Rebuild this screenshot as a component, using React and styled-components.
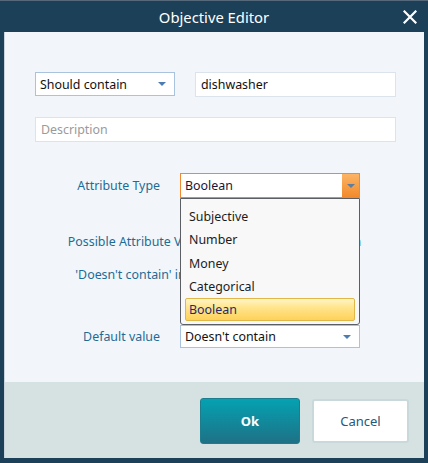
import React from "react";
import styled, { createGlobalStyle } from "styled-components";

const Global = createGlobalStyle`
  html, body { margin: 0; padding: 0; background: #1d4059; }
  * { box-sizing: border-box; }
  body { font-family: "Noto Sans", "Open Sans", sans-serif; }
`;

const Frame = styled.div`
  width: 428px;
  height: 463px;
  background: #1d4059;
  border-top: 1px solid #55697a;
  display: flex;
  flex-direction: column;
  padding: 0 4px 5px 4px;
`;

const TitleBar = styled.div`
  height: 31px;
  display: flex;
  align-items: center;
  justify-content: center;
  position: relative;
  color: #ffffff;
  font-size: 14.8px;
  font-family: "Noto Sans", sans-serif;
`;

const CloseButton = styled.button`
  position: absolute;
  right: 6px;
  top: 8px;
  width: 16px;
  height: 16px;
  padding: 0;
  border: 0;
  background: transparent;
  display: flex;
  align-items: center;
  justify-content: center;
`;

const Body = styled.div`
  flex: 1;
  background: #f2f6fa;
  border-left: 1px solid #c9d3db;
  display: flex;
  flex-direction: column;
`;

const Content = styled.div`
  flex: 1;
  padding: 40px 28px 0 30px;
  display: flex;
  flex-direction: column;
  font-size: 12.4px;
`;

const Row = styled.div`
  display: flex;
  gap: 20px;
  margin-top: ${(p) => p.$mt || 0}px;
`;

const Select = styled.div`
  width: ${(p) => p.$w}px;
  height: ${(p) => p.$h || 24}px;
  background: #ffffff;
  border: 1px solid ${(p) => p.$border || "#a9c3de"};
  display: flex;
  align-items: center;
  padding-left: 4px;
  color: ${(p) => p.$color || "#111"};
  position: relative;
`;

const SelectText = styled.span`
  flex: 1;
`;

const ArrowCell = styled.div`
  width: ${(p) => p.$w || 20}px;
  align-self: stretch;
  display: flex;
  align-items: center;
  justify-content: center;
  background: ${(p) => p.$bg || "transparent"};
`;

const Arrow = styled.span`
  width: 0;
  height: 0;
  border-left: 4px solid transparent;
  border-right: 4px solid transparent;
  border-top: 4px solid ${(p) => p.$c || "#4b7db3"};
`;

const Input = styled.div`
  flex: 1;
  height: 25px;
  background: #fff;
  border: 1px solid #dde3ea;
  display: flex;
  align-items: center;
  padding-left: 5px;
  color: ${(p) => (p.$placeholder ? "#9a9a9a" : "#111")};
`;

const FieldRow = styled.div`
  display: grid;
  grid-template-columns: 125px 180px;
  column-gap: 20px;
  align-items: center;
  margin-top: ${(p) => p.$mt || 0}px;
  position: relative;
`;

const Label = styled.div`
  text-align: right;
  color: #1f6b95;
`;

const Note = styled.div`
  text-align: center;
  color: #1f6b95;
  white-space: nowrap;
  margin-top: ${(p) => p.$mt || 0}px;
  margin-left: -30px;
  margin-right: -28px;
`;

const DropList = styled.div`
  position: absolute;
  left: 145px;
  top: 25px;
  width: 180px;
  height: 127px;
  background: #f8f8f8;
  border: 1px solid #5b5f63;
  border-radius: 0 0 3px 3px;
  padding: 6px 4px 0 4px;
  z-index: 2;
  display: flex;
  flex-direction: column;
`;

const DropItem = styled.div`
  height: 23.3px;
  display: flex;
  align-items: center;
  padding-left: 3px;
  color: ${(p) => (p.$active ? "#1b2b70" : "#1c1c1c")};
  border: 1px solid ${(p) => (p.$active ? "#e1b74a" : "transparent")};
  border-radius: 2px;
  background: ${(p) =>
    p.$active ? "linear-gradient(#fff4c4 0%, #ffe58c 40%, #fdd25a 100%)" : "transparent"};
`;

const Footer = styled.div`
  height: 76px;
  background: #d6e1e2;
  display: flex;
  justify-content: flex-end;
  align-items: center;
  gap: 12px;
  padding: 2px 15px 0 0;
`;

const OkButton = styled.button`
  width: 100px;
  height: 46px;
  border: 1px solid #1e7d8d;
  border-radius: 3px;
  background: linear-gradient(#04a2b2, #1e7186);
  color: #fff;
  font-weight: 700;
  font-size: 13px;
  font-family: "Noto Sans", sans-serif;
`;

const CancelButton = styled.button`
  width: 97px;
  height: 44px;
  border: 2px solid #c9d9db;
  border-radius: 3px;
  background: #fff;
  color: #25587a;
  font-size: 13px;
  font-family: "Noto Sans", sans-serif;
`;

export default function App() {
  const items = ["Subjective", "Number", "Money", "Categorical", "Boolean"];
  return (
    <>
      <Global />
      <Frame>
        <TitleBar>
          Objective Editor
          <CloseButton aria-label="close">
            <svg width="14" height="14" viewBox="0 0 14 14">
              <path d="M1.5 1.5 L12.5 12.5 M12.5 1.5 L1.5 12.5" stroke="#fff" strokeWidth="2.2" strokeLinecap="square" />
            </svg>
          </CloseButton>
        </TitleBar>
        <Body>
          <Content>
            <Row>
              <Select $w={140}>
                <SelectText>Should contain</SelectText>
                <ArrowCell $w={24}><Arrow /></ArrowCell>
              </Select>
              <Input>dishwasher</Input>
            </Row>
            <Row $mt={20}>
              <Input $placeholder>Description</Input>
            </Row>
            <FieldRow $mt={31}>
              <Label>Attribute Type</Label>
              <Select $w={180} $h={25} $border="#f2892e" $color="#16163a">
                <SelectText>Boolean</SelectText>
                <ArrowCell $w={17} $bg="linear-gradient(#fbb566, #f28a2c)">
                  <Arrow $c="#5d7ea0" />
                </ArrowCell>
              </Select>
              <DropList>
                {items.map((it) => (
                  <DropItem key={it} $active={it === "Boolean"}>{it}</DropItem>
                ))}
              </DropList>
            </FieldRow>
            <Note $mt={35}>Possible Attribute Values: Contain, Doesn't contain</Note>
            <Note $mt={16}>'Doesn't contain' implies attribute is not present</Note>
            <FieldRow $mt={42}>
              <Label>Default value</Label>
              <Select $w={180} $h={23}>
                <SelectText>Doesn't contain</SelectText>
                <ArrowCell $w={24}><Arrow /></ArrowCell>
              </Select>
            </FieldRow>
          </Content>
          <Footer>
            <OkButton>Ok</OkButton>
            <CancelButton>Cancel</CancelButton>
          </Footer>
        </Body>
      </Frame>
    </>
  );
}
